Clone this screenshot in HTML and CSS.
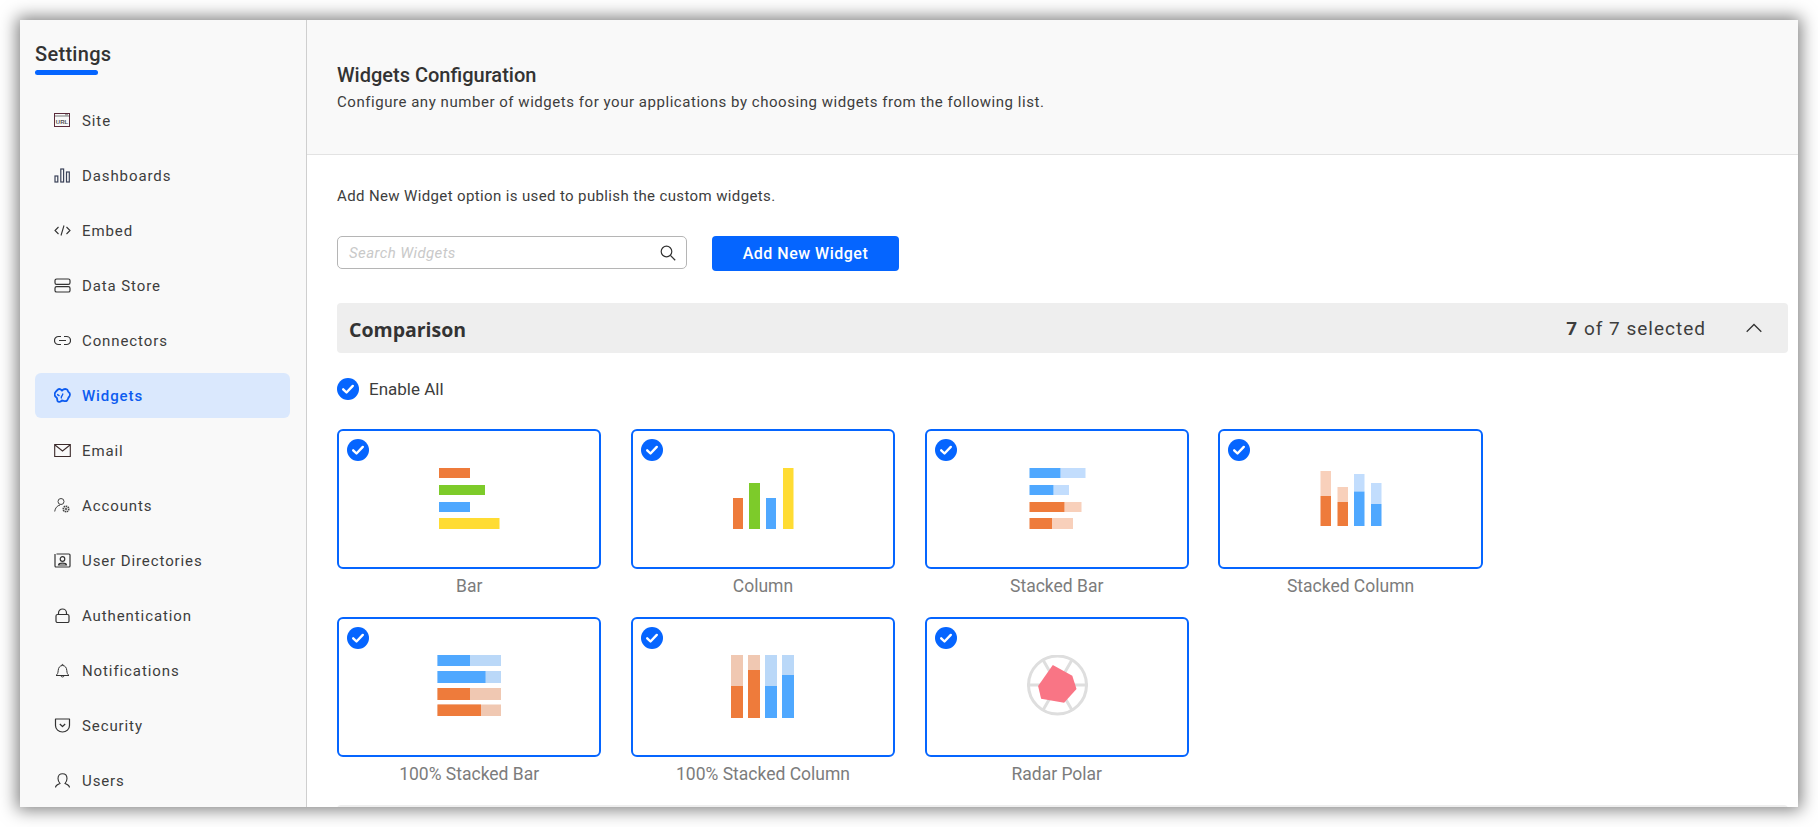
FILE: index.html
```html
<!DOCTYPE html>
<html lang="en">
<head>
<meta charset="utf-8">
<title>Widgets Configuration</title>
<link rel="stylesheet" href="styles.css">
</head>
<body>
<svg class="defs" width="0" height="0" aria-hidden="true">
  <symbol id="tick" viewBox="0 0 22 22">
    <circle cx="11" cy="11" r="11" fill="#0565ff"/>
    <path d="M6.2 11.3l3.3 3.2 6.3-6.6" fill="none" stroke="#fff" stroke-width="2.4" stroke-linecap="round" stroke-linejoin="round"/>
  </symbol>
</svg>
<div class="window">
  <aside class="sidebar">
    <h1 class="side-title">Settings</h1>
    <div class="side-rule"></div>
    <nav class="nav">
      <a class="nav-item"><svg class="ico" viewBox="0 0 17 15"><rect x=".5" y=".5" width="15" height="13" fill="none" stroke="#5a2a3a"/><path d="M1 3h14M11 1.800h3" stroke="#777"/><text x="8" y="11" class="url">URL</text></svg>Site</a>
      <a class="nav-item"><svg class="ico" viewBox="0 0 17 15"><g fill="none" stroke="#3a4258" stroke-width="1.2"><rect x="1" y="8" width="2.800" height="6"/><rect x="6.800" y="1" width="2.800" height="13"/><rect x="12.500" y="4" width="2.800" height="10"/></g></svg>Dashboards</a>
      <a class="nav-item"><svg class="ico" viewBox="0 0 17 15"><path d="M4.5 4L1 7.5 4.5 11M12.5 4L16 7.5 12.5 11M10 2.5L7 12.5" fill="none" stroke="#333" stroke-width="1.1"/></svg>Embed</a>
      <a class="nav-item"><svg class="ico" viewBox="0 0 17 15"><g fill="none" stroke="#333" stroke-width="1.2"><rect x="1" y="1" width="15" height="5.4" rx="1.6"/><rect x="1" y="8.6" width="15" height="5.4" rx="1.6"/></g></svg>Data Store</a>
      <a class="nav-item"><svg class="ico" viewBox="0 0 17 15"><path d="M7 3.500H4.500a4 4 0 000 8H7M10 3.500h2.500a4 4 0 010 8H10M5 7.500h7" fill="none" stroke="#333" stroke-width="1.2"/></svg>Connectors</a>
      <a class="nav-item active"><svg class="ico" viewBox="0 0 17 15"><path d="M4 1.500C5.500.3 7 1.500 8 2.500 9.500 1 11 .5 13 1.500c1 .5.500 2 2 3 1.500 1 1 3.500 0 4.500s-1 2.500-2 3.500c-1.500 1.500-3.500 0-5 0-1.500 1.500-3.500 2-4.500.5-.5-1.500 0-2.500-1-3.500C1 8.500.3 6.500 1 5c.5-1.500 2-2.500 3-3.500z" fill="none" stroke="#0d5cf0" stroke-width="1.800"/><path d="M8.500 5.500C10 7 6 8 7.500 10.500M3 6.500C4.500 7 5 7.500 5.500 8" fill="none" stroke="#0d5cf0" stroke-width="1.400"/></svg>Widgets</a>
      <a class="nav-item"><svg class="ico" viewBox="0 0 17 15"><path d="M.7 1.500h15.600v12H.7zM1 2l7.500 6L16 2" fill="none" stroke="#3b2a2a" stroke-width="1.100"/></svg>Email</a>
      <a class="nav-item"><svg class="ico" viewBox="0 0 17 15"><g fill="none" stroke="#444" stroke-width="1"><circle cx="7" cy="3.500" r="3"/><path d="M.7 13.500c.4-3.500 2.600-6 5.300-6.400"/><circle cx="12" cy="11" r="2.800" stroke-width="1.500" stroke-dasharray="1.500 .6"/><circle cx="12" cy="11" r=".9"/></g></svg>Accounts</a>
      <a class="nav-item"><svg class="ico" viewBox="0 0 17 15"><g fill="none" stroke="#333" stroke-width="1.200"><path d="M2.500 1H15a1 1 0 011 1v11a1 1 0 01-1 1H2a1 1 0 01-1-1V1"/><circle cx="8.500" cy="6" r="2.300"/><path d="M4.500 12c.4-2.500 7.600-2.500 8 0z"/></g></svg>User Directories</a>
      <a class="nav-item"><svg class="ico" viewBox="0 0 17 15"><g fill="none" stroke="#333" stroke-width="1.200"><rect x="2" y="6.500" width="13" height="8" rx="1.500"/><path d="M4.500 6.500V5a4 4 0 018 0v1.500"/></g></svg>Authentication</a>
      <a class="nav-item"><svg class="ico" viewBox="0 0 17 15"><path d="M2 12.500h13c-1.500-1-2-2.500-2.200-5-.2-3-1.800-5-4.300-5s-4.100 2-4.300 5c-.2 2.500-.7 4-2.200 5zM7 13c.3 1.300 2.700 1.300 3 0M7.700 2.400c0-1.300 1.600-1.300 1.600 0" fill="none" stroke="#333" stroke-width="1"/></svg>Notifications</a>
      <a class="nav-item"><svg class="ico" viewBox="0 0 17 15"><path d="M1.500 1h14v6.500a7 6.500 0 01-14 0zM5.800 6l2.700 2.500L11.200 6" fill="none" stroke="#333" stroke-width="1.200" stroke-linejoin="round"/></svg>Security</a>
      <a class="nav-item"><svg class="ico" viewBox="0 0 17 15"><path d="M1.500 14.500c0-2.500 2.500-3 4.500-4-1.300-1.500-2-3-2-5 0-3 2-4.800 4.500-4.800S13 2.500 13 5.500c0 2-.7 3.500-2 5 2 1 4.500 1.500 4.500 4" fill="none" stroke="#333" stroke-width="1.100"/></svg>Users</a>
    </nav>
  </aside>
  <main class="main">
    <header class="head">
      <h2 class="head-title">Widgets Configuration</h2>
      <p class="head-sub">Configure any number of widgets for your applications by choosing widgets from the following list.</p>
    </header>
    <section class="content">
      <p class="intro">Add New Widget option is used to publish the custom widgets.</p>
      <div class="toolbar">
        <div class="search">
          <span class="placeholder">Search Widgets</span>
          <svg class="search-ico" viewBox="0 0 16 16"><circle cx="6.500" cy="6.500" r="5.300" fill="none" stroke="#333" stroke-width="1.200"/><path d="M10.400 10.400l4.800 4.800" stroke="#333" stroke-width="1.300"/></svg>
        </div>
        <button class="add-btn">Add New Widget</button>
      </div>
      <div class="section-bar">
        <span class="section-name">Comparison</span>
        <span class="section-count"><b>7</b> of 7 selected</span>
        <svg class="chev" viewBox="0 0 16 10"><path d="M.7 8.800L8 1.500l7.300 7.300" fill="none" stroke="#333" stroke-width="1.300"/></svg>
      </div>
      <label class="enable"><svg class="enable-tick"><use href="#tick"/></svg>Enable All</label>
      <div class="cards">
        <figure class="item">
          <div class="card"><svg class="tick"><use href="#tick"/></svg>
            <svg class="chart" viewBox="0 0 64 64"><rect class="o" x="2" y="1" width="31" height="10"/><rect class="g" x="2" y="18" width="46" height="10"/><rect class="b" x="2" y="35" width="31" height="10"/><rect class="y" x="2" y="51" width="60.500" height="11"/></svg>
          </div>
          <figcaption class="label">Bar</figcaption>
        </figure>
        <figure class="item">
          <div class="card"><svg class="tick"><use href="#tick"/></svg>
            <svg class="chart" viewBox="0 0 64 64"><rect class="o" x="2" y="31" width="10" height="31"/><rect class="g" x="18" y="16" width="11" height="46"/><rect class="b" x="35" y="31" width="10" height="31"/><rect class="y" x="52" y="1" width="10.500" height="61"/></svg>
          </div>
          <figcaption class="label">Column</figcaption>
        </figure>
        <figure class="item">
          <div class="card"><svg class="tick"><use href="#tick"/></svg>
            <svg class="chart" viewBox="0 0 64 64"><rect class="bl" x="35.500" y="1" width="25" height="10"/><rect class="b" x="4.500" y="1" width="31" height="10"/><rect class="bl" x="28.500" y="18" width="15.500" height="10"/><rect class="b" x="4.500" y="18" width="24" height="10"/><rect class="ol" x="39.500" y="35" width="17" height="10"/><rect class="o" x="4.500" y="35" width="35" height="10"/><rect class="ol" x="27" y="51" width="21" height="11"/><rect class="o" x="4.500" y="51" width="22.500" height="11"/></svg>
          </div>
          <figcaption class="label">Stacked Bar</figcaption>
        </figure>
        <figure class="item">
          <div class="card"><svg class="tick"><use href="#tick"/></svg>
            <svg class="chart" viewBox="0 0 64 64"><rect class="ol" x="1.500" y="4" width="10.500" height="25"/><rect class="o" x="1.500" y="29" width="10.500" height="30"/><rect class="ol" x="18.500" y="20" width="10.500" height="15"/><rect class="o" x="18.500" y="35" width="10.500" height="24"/><rect class="bl" x="35" y="7" width="10.500" height="17.500"/><rect class="b" x="35" y="24.500" width="10.500" height="34.500"/><rect class="bl" x="52" y="16" width="10.500" height="21"/><rect class="b" x="52" y="37" width="10.500" height="22"/></svg>
          </div>
          <figcaption class="label">Stacked Column</figcaption>
        </figure>
        <figure class="item">
          <div class="card"><svg class="tick"><use href="#tick"/></svg>
            <svg class="chart" viewBox="0 1 64 64"><rect class="bp" x=".5" y="0" width="63.500" height="12"/><rect class="b" x=".5" y="0" width="32.500" height="12"/><rect class="bp" x=".5" y="17" width="63.500" height="12"/><rect class="b" x=".5" y="17" width="48" height="12"/><rect class="op" x=".5" y="34" width="63.500" height="12"/><rect class="o" x=".5" y="34" width="32.500" height="12"/><rect class="op" x=".5" y="50.500" width="63.500" height="11.500"/><rect class="o" x=".5" y="50.500" width="43.500" height="11.500"/></svg>
          </div>
          <figcaption class="label">100% Stacked Bar</figcaption>
        </figure>
        <figure class="item">
          <div class="card"><svg class="tick"><use href="#tick"/></svg>
            <svg class="chart" viewBox="0 1 64 64"><rect class="op" x="0" y="1" width="12" height="63"/><rect class="o" x="0" y="32" width="12" height="32"/><rect class="op" x="17" y="1" width="12" height="63"/><rect class="o" x="17" y="16" width="12" height="48"/><rect class="bp" x="34" y="1" width="12" height="63"/><rect class="b" x="34" y="32" width="12" height="32"/><rect class="bp" x="51" y="1" width="12" height="63"/><rect class="b" x="51" y="21" width="12" height="43"/></svg>
          </div>
          <figcaption class="label">100% Stacked Column</figcaption>
        </figure>
        <figure class="item">
          <div class="card"><svg class="tick"><use href="#tick"/></svg>
            <svg class="chart" viewBox="0 0 64 64"><g fill="none" stroke="#dedede" stroke-width="3"><ellipse cx="32.500" cy="30" rx="29" ry="29"/><path d="M2 30h61M17.500 4l30 52M47.500 4l-30 52"/></g><polygon points="27.800,10 47.300,20.700 51.500,34 39.100,47.700 16.100,43.700 13.100,31" fill="#f97585"/></svg>
          </div>
          <figcaption class="label">Radar Polar</figcaption>
        </figure>
      </div>
      <div class="next-bar"></div>
    </section>
  </main>
</div>
</body>
</html>
```
FILE: styles.css
```css
* { box-sizing: border-box; }
html, body { margin: 0; height: 827px; overflow: hidden; background: #fff; }
body { padding: 20px; font-family: Roboto, "Liberation Sans", sans-serif; color: #333; }
.defs { position: absolute; }
.window {
  display: flex;
  height: 787px;
  background: #fff;
  box-shadow: 0 0 16px 3px rgba(0, 0, 0, .5);
  overflow: hidden;
}
.sidebar {
  flex: 0 0 287px;
  background: #f9f9f9;
  border-right: 1px solid #cfcfcf;
  padding: 20px 0 0 15px;
}
.side-title { margin: 0; font-size: 20px; line-height: 28px; font-weight: 500; letter-spacing: .3px; color: #333; }
.side-rule { width: 63px; height: 5px; margin-top: 2px; border-radius: 3px; background: #0565ff; }
.nav { display: flex; flex-direction: column; gap: 10px; width: 255px; margin-top: 23px; }
.nav-item {
  display: flex; align-items: center; gap: 11px;
  height: 45px; padding-left: 19px;
  font-size: 15px; letter-spacing: .9px; color: #3d3d3d; border-radius: 6px;
}
.ico { width: 17px; height: 15px; flex: none; }
.url { font: 700 6px "Liberation Sans", sans-serif; text-anchor: middle; fill: #555; letter-spacing: 0; }
.active { background: #dae8fd; color: #0d5cf0; font-weight: 500; }
.main { flex: 1; min-width: 0; }
.head {
  height: 135px; padding: 41px 30px 0;
  background: #f9f9f9; border-bottom: 1px solid #e3e3e3;
}
.head-title { margin: 0; font-size: 20px; line-height: 28px; font-weight: 500; color: #333; }
.head-sub { margin: 3px 0 0; font-size: 15px; line-height: 20px; letter-spacing: .54px; color: #3d3d3d; }
.content { padding: 0 10px 0 30px; }
.intro { margin: 31px 0 0; font-size: 15px; line-height: 20px; letter-spacing: .37px; color: #3d3d3d; }
.toolbar { display: flex; align-items: flex-start; gap: 25px; margin-top: 30px; }
.search {
  display: flex; align-items: center; justify-content: space-between;
  width: 350px; height: 33px; padding: 0 10px 0 11px;
  border: 1px solid #b5b5b5; border-radius: 5px; background: #fff;
}
.placeholder { font-size: 15px; font-style: italic; letter-spacing: .4px; color: #c9c9c9; }
.search-ico { width: 16px; height: 16px; }
.add-btn {
  width: 187px; height: 35px; border: 0; border-radius: 4px;
  background: #0565ff; color: #fff;
  font: 500 16px Roboto, sans-serif; letter-spacing: .5px;
}
.section-bar {
  display: flex; align-items: center;
  height: 50px; margin-top: 32px; padding: 0 26px 0 12px;
  background: #eee; border-radius: 4px;
}
.section-name { font: 700 19.500px "Open Sans", sans-serif; color: #333; flex: 1; margin-top: 2px; }
.section-count { font-size: 19px; letter-spacing: 1px; color: #3d3d3d; }
.section-count b { font-weight: 700; }
.chev { width: 16px; height: 10px; margin-left: 40px; }
.enable { display: flex; align-items: center; gap: 10px; height: 22px; margin-top: 25px; font-size: 17px; color: #3d3d3d; }
.enable-tick { width: 22px; height: 22px; }
.cards { display: grid; grid-template-columns: repeat(4, 264.400px); column-gap: 29.400px; row-gap: 14px; margin-top: 29px; }
.item { margin: 0; }
.card {
  position: relative; display: flex; align-items: center; justify-content: center;
  height: 140px; border: 2px solid #0565ff; border-radius: 6px; background: #fff;
}
.tick { position: absolute; left: 8px; top: 8px; width: 22px; height: 22px; }
.chart { width: 64px; height: 64px; }
.label { height: 34px; line-height: 34px; text-align: center; font-size: 17.500px; color: #7c7c7c; }
.o { fill: #ee7b3b; }
.g { fill: #7dcb2a; }
.b { fill: #4fa8ff; }
.y { fill: #ffdc33; }
.ol { fill: #f8d0bb; }
.bl { fill: #c2ddfd; }
.op { fill: #f0c8b2; }
.bp { fill: #bad8f8; }
.next-bar { height: 50px; margin-top: 14px; background: #eee; border-radius: 4px; }
```
